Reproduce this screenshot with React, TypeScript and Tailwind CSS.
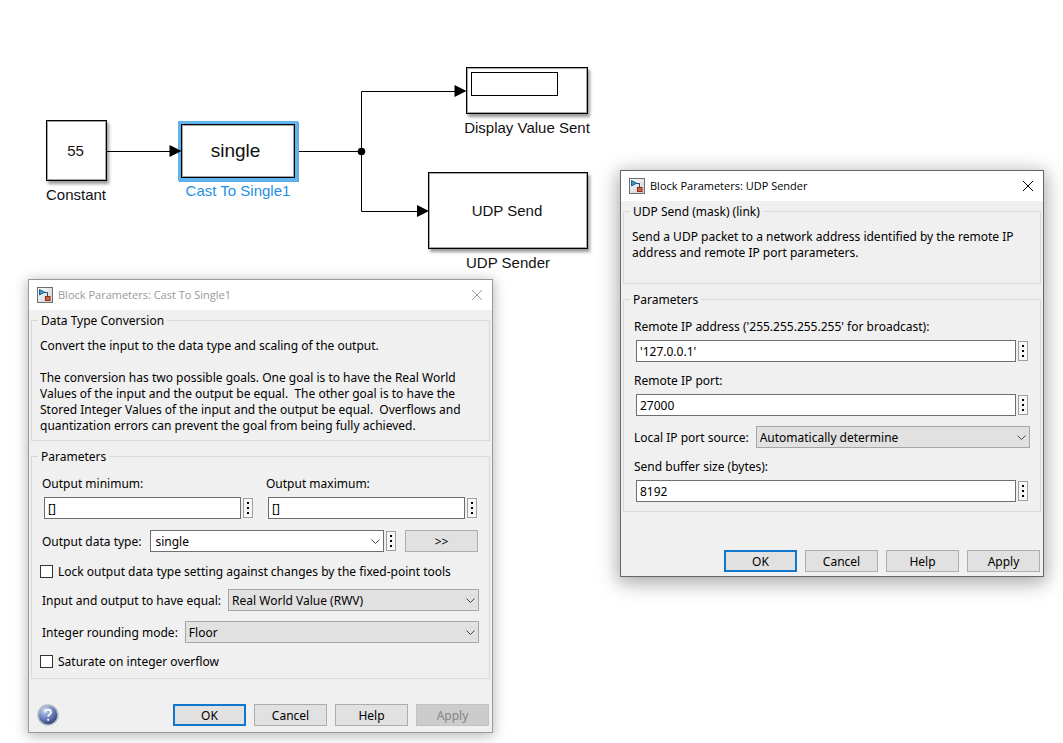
import type { ReactNode } from "react";

const control = "h-[22px] min-w-0 pt-px text-[12px] leading-4 text-black outline-none";

function BlockIcon() {
  return (
    <svg width="16" height="16" viewBox="0 0 16 16" aria-hidden="true" className="shrink-0">
      <defs>
        <linearGradient id="iconBack" x1="0" y1="0" x2="1" y2="1">
          <stop offset="0" stopColor="#ffffff" />
          <stop offset="1" stopColor="#c9cdd3" />
        </linearGradient>
      </defs>
      <rect x="0.5" y="0.5" width="15" height="15" fill="url(#iconBack)" stroke="#6d6d6d" />
      <path d="M7 5.500h3.500V10" fill="none" stroke="#2b4a68" />
      <path d="M2.500 2.500v5.500L7.500 5.200z" fill="#3a9bc8" stroke="#1b5f8c" />
      <rect x="8.500" y="9.500" width="4.500" height="4" fill="#d8603a" stroke="#8c2f1a" />
    </svg>
  );
}

function HelpIcon() {
  return (
    <svg width="22" height="22" viewBox="0 0 22 22" aria-hidden="true">
      <defs>
        <radialGradient id="helpBall" cx="0.35" cy="0.25" r="0.8">
          <stop offset="0" stopColor="#cfd8f2" />
          <stop offset="0.5" stopColor="#7288c2" />
          <stop offset="1" stopColor="#26386f" />
        </radialGradient>
      </defs>
      <circle cx="11" cy="11" r="10" fill="url(#helpBall)" stroke="#b4b8c4" strokeWidth="1.5" />
      <path d="M8 8.6C8 6.600 9.300 5.600 11 5.600s3 1 3 2.600c0 2.200-2.800 2.300-2.800 4.600" fill="none" stroke="#fff" strokeWidth="1.7" />
      <circle cx="11.2" cy="15.8" r="1.1" fill="#fff" />
    </svg>
  );
}

function MoreButton({ label }: { label: string }) {
  return (
    <button
      type="button"
      aria-label={label}
      className="flex h-5 w-[10px] shrink-0 flex-col items-center justify-center gap-[3px] border border-[#a0a0a0] bg-[#f6f6f6]"
    >
      <span className="size-[2px] bg-black" />
      <span className="size-[2px] bg-black" />
      <span className="size-[2px] bg-black" />
    </button>
  );
}

function Field({ id, label, value }: { id: string; label: string; value: string }) {
  return (
    <div className="flex min-w-0 flex-1 flex-col gap-[5px] pt-px pr-[2px]">
      <label htmlFor={id}>{label}</label>
      <div className="flex items-center gap-[2px] pl-[2px]">
        <input
          id={id}
          defaultValue={value}
          className={`${control} flex-1 border border-[#6f6f6f] bg-white px-[3px]`}
        />
        <MoreButton label={`More actions for ${label}`} />
      </div>
    </div>
  );
}

function Choice({ id, value, editable }: { id: string; value: string; editable?: boolean }) {
  return (
    <div className="relative flex min-w-0 flex-1">
      <select
        id={id}
        defaultValue={value}
        className={`${control} w-full appearance-none border ${
          editable ? "border-[#6f6f6f] bg-white pl-1" : "border-[#a6a6a6] bg-[#e1e1e1] pl-[3px]"
        }`}
      >
        <option>{value}</option>
      </select>
      <svg
        width="9"
        height="6"
        viewBox="0 0 9 6"
        aria-hidden="true"
        className="pointer-events-none absolute top-[9px] right-1"
      >
        <path d="M0.5 0.5l4 4 4-4" fill="none" stroke="#444" />
      </svg>
    </div>
  );
}

function ChoiceRow({ id, label, value }: { id: string; label: string; value: string }) {
  return (
    <div className="flex items-center gap-[7px]">
      <label htmlFor={id} className="pt-[2px]">
        {label}
      </label>
      <Choice id={id} value={value} />
    </div>
  );
}

function Check({ id, label }: { id: string; label: string }) {
  return (
    <div className="-ml-[2px] flex h-4 items-center gap-[5px]">
      <input
        id={id}
        type="checkbox"
        className="size-[13px] appearance-none border border-[#333] bg-white checked:bg-[#0078d7]"
      />
      <label htmlFor={id} className="pt-[2px]">
        {label}
      </label>
    </div>
  );
}

function Group({ title, className, children }: { title: string; className: string; children: ReactNode }) {
  return (
    <fieldset className="mx-[2px] mb-[7px] min-w-0 border border-[#d9d9d9]">
      <legend className="ml-[6px] h-4 px-[3px] leading-[18px]">{title}</legend>
      <div className={className}>{children}</div>
    </fieldset>
  );
}

function PushButton({ children, primary, disabled }: { children: ReactNode; primary?: boolean; disabled?: boolean }) {
  const look = disabled
    ? "border border-[#c2c2c2] bg-[#cccccc] text-[#838383]"
    : primary
      ? "border-2 border-[#0f78cc] bg-[#e1e1e1]"
      : "border border-[#adadad] bg-[#e1e1e1]";
  return (
    <button
      type="button"
      disabled={disabled}
      className={`flex h-[22px] w-[73px] shrink-0 items-center justify-center pt-[2px] ${look}`}
    >
      {children}
    </button>
  );
}

function Dialog({
  title,
  active,
  className,
  children,
}: {
  title: string;
  active?: boolean;
  className: string;
  children: ReactNode;
}) {
  return (
    <section
      aria-label={title}
      className={`absolute border bg-[#f0f0f0] font-['Noto_Sans',sans-serif] text-[12px] leading-4 text-black ${
        active
          ? "border-[#666] shadow-[0_4px_18px_2px_rgba(0,0,0,0.35)]"
          : "border-[#999] shadow-[0_2px_12px_1px_rgba(0,0,0,0.28)]"
      } ${className}`}
    >
      <header
        className={`mb-[2px] flex h-[30px] items-center gap-[5px] bg-white pr-[9px] pl-2 font-['Open_Sans',sans-serif] text-[11px] ${
          active ? "text-black" : "text-[#999]"
        }`}
      >
        <BlockIcon />
        <h2 className="flex-1">{title}</h2>
        <button type="button" aria-label="Close">
          <svg width="12" height="12" viewBox="0 0 12 12" aria-hidden="true">
            <path d="M1 1l10 10M11 1L1 11" stroke="currentColor" />
          </svg>
        </button>
      </header>
      {children}
    </section>
  );
}

function Model() {
  const block = "absolute flex items-center justify-center border border-black bg-white";
  const shade = "shadow-[inset_0_0_0_1px_rgba(0,0,0,0.35),2px_3px_3px_rgba(0,0,0,0.4)]";
  const caption = "absolute -translate-x-1/2 whitespace-nowrap";
  return (
    <div className="font-['Liberation_Sans',Arial,sans-serif] text-[15px] leading-5 text-[#111]">
      <svg width="600" height="270" viewBox="0 0 600 270" aria-hidden="true" className="absolute top-0 left-0">
        <path d="M107 151.500H172M298 151.500H361.500M457 91.500H361.500V211.500H420" fill="none" stroke="#000" />
        <circle cx="361.5" cy="151.5" r="3.8" />
      </svg>
      <div className={`${block} ${shade} top-[120px] left-[46px] h-[61px] w-[61px] pr-[2px]`}>55</div>
      <div className={`${caption} top-[185px] left-[76px]`}>Constant</div>
      <div
        className={`${block} top-[124px] left-[181px] h-[54px] w-[114px] pr-[5px] text-[19px] shadow-[inset_0_0_0_1px_rgba(0,0,0,0.35),0_0_0_3px_#62b4ee,1px_1px_0_3px_#5aa9e2]`}
      >
        single
      </div>
      <div className={`${caption} top-[181px] left-[238px] text-[#2490e4]`}>Cast To Single1</div>
      <div className={`${block} ${shade} top-[67px] left-[466px] h-[47px] w-[122px]`}>
        <div className="absolute top-[4px] left-[4px] h-6 w-[87px] border border-black" />
      </div>
      <div className={`${caption} top-[118px] left-[527px]`}>Display Value Sent</div>
      <div className={`${block} ${shade} top-[172px] left-[428px] h-[77px] w-[160px] pr-[2px]`}>UDP Send</div>
      <div className={`${caption} top-[253px] left-[508px]`}>UDP Sender</div>
      <svg width="600" height="270" viewBox="0 0 600 270" aria-hidden="true" className="absolute top-0 left-0">
        <path d="M169.500 145l12 6-12 6zM454.500 85l12 6-12 6zM417 205l12 6-12 6z" />
      </svg>
    </div>
  );
}

export default function App() {
  return (
    <main className="relative min-h-screen overflow-hidden bg-white">
      <Model />

      <Dialog title="Block Parameters: Cast To Single1" className="top-[279px] left-[28px] w-[465px]">
        <Group title="Data Type Conversion" className="px-2 pt-[10px] pb-[6px]">
          <p>Convert the input to the data type and scaling of the output.</p>
          <p className="mt-4 whitespace-pre-line">
            {"The conversion has two possible goals. One goal is to have the Real World\nValues of the input and the output be equal.\u00a0 The other goal is to have the\nStored Integer Values of the input and the output be equal.\u00a0 Overflows and\nquantization errors can prevent the goal from being fully achieved."}
          </p>
        </Group>
        <Group title="Parameters" className="flex flex-col gap-[10px] px-[10px] pt-[11px] pb-[9px]">
          <div className="flex gap-[11px]">
            <Field id="out-min" label="Output minimum:" value="[]" />
            <Field id="out-max" label="Output maximum:" value="[]" />
          </div>
          <div className="flex items-center gap-[9px] py-px pr-px">
            <label htmlFor="out-type" className="pt-[2px]">
              Output data type:
            </label>
            <div className="flex flex-1 items-center gap-[2px]">
              <Choice id="out-type" value="single" editable />
              <MoreButton label="More actions for data type" />
            </div>
            <PushButton>&gt;&gt;</PushButton>
          </div>
          <Check id="lock" label="Lock output data type setting against changes by the fixed-point tools" />
          <ChoiceRow id="equal" label="Input and output to have equal:" value="Real World Value (RWV)" />
          <ChoiceRow id="rounding" label="Integer rounding mode:" value="Floor" />
          <Check id="saturate" label="Saturate on integer overflow" />
        </Group>
        <footer className="flex items-center gap-2 pt-[18px] pr-[3px] pb-[6px] pl-2">
          <button type="button" aria-label="Help about this block" className="mr-auto">
            <HelpIcon />
          </button>
          <PushButton primary>OK</PushButton>
          <PushButton>Cancel</PushButton>
          <PushButton>Help</PushButton>
          <PushButton disabled>Apply</PushButton>
        </footer>
      </Dialog>

      <Dialog title="Block Parameters: UDP Sender" active className="top-[170px] left-[620px] w-[424px]">
        <Group title="UDP Send (mask) (link)" className="px-2 pt-[10px] pb-[22px]">
          <p className="whitespace-pre-line">
            {"Send a UDP packet to a network address identified by the remote IP\naddress and remote IP port parameters."}
          </p>
        </Group>
        <Group title="Parameters" className="flex flex-col gap-[10px] px-[10px] pt-[11px] pb-[9px]">
          <Field id="remote-ip" label="Remote IP address ('255.255.255.255' for broadcast):" value="'127.0.0.1'" />
          <Field id="remote-port" label="Remote IP port:" value="27000" />
          <ChoiceRow id="port-source" label="Local IP port source:" value="Automatically determine" />
          <Field id="buffer" label="Send buffer size (bytes):" value="8192" />
        </Group>
        <footer className="flex items-center justify-end gap-2 pt-[31px] pr-[3px] pb-1">
          <PushButton primary>OK</PushButton>
          <PushButton>Cancel</PushButton>
          <PushButton>Help</PushButton>
          <PushButton>Apply</PushButton>
        </footer>
      </Dialog>
    </main>
  );
}
